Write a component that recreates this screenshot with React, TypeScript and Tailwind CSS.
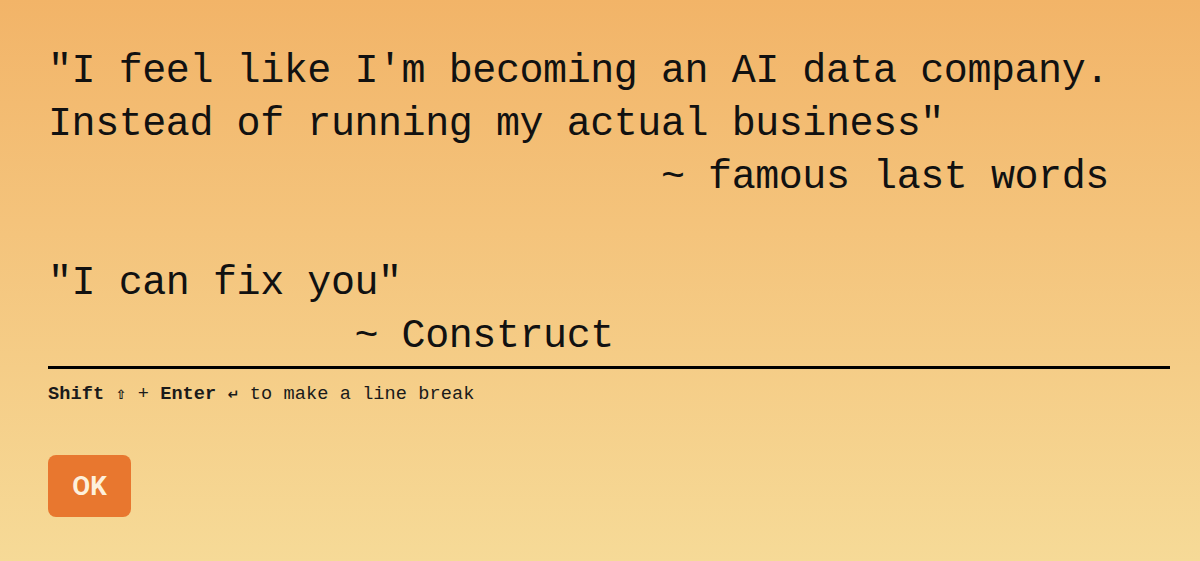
import React from "react";

const lines = [
  '"I feel like I\'m becoming an AI data company.',
  'Instead of running my actual business"',
  "                          ~ famous last words",
  "",
  '"I can fix you"',
  "             ~ Construct",
];

export default function App() {
  return (
    <div className="min-h-screen w-full bg-gradient-to-b from-[#f2b468] to-[#f6da97] pl-12 pr-[30px] pt-[45px]">
      <div className="whitespace-pre border-b-[3px] border-black pb-[3px] font-['Liberation_Mono',monospace] text-[40px] leading-[53px] tracking-[-0.43px] text-[#111]">
        {lines.map((l, i) => (
          <div key={i} className="h-[53px]">
            {l}
          </div>
        ))}
      </div>
      <div className="mt-[13px] whitespace-pre font-['Liberation_Mono',monospace] text-[18.6px] leading-[24px] tracking-[0.07px] text-[#1a1a1a]">
        <span className="font-bold">Shift</span>{" "}
        <span className="inline-block w-[11.1px] text-center font-['DejaVu_Sans',sans-serif] text-[13px] font-bold text-[#1a1a1a]">⇧</span>
        {" + "}
        <span className="font-bold">Enter</span>{" "}
        <span className="inline-block w-[11.1px] text-center font-['DejaVu_Sans',sans-serif] text-[14px] font-bold text-[#1a1a1a]">↵</span>
        {" to make a line break"}
      </div>
      <button className="mt-[48px] flex h-[62px] w-[83px] items-center justify-center rounded-[8px] bg-[#e8772f] font-['Roboto',sans-serif] text-[26px] font-bold text-[#fdf0dc]">
        OK
      </button>
    </div>
  );
}
